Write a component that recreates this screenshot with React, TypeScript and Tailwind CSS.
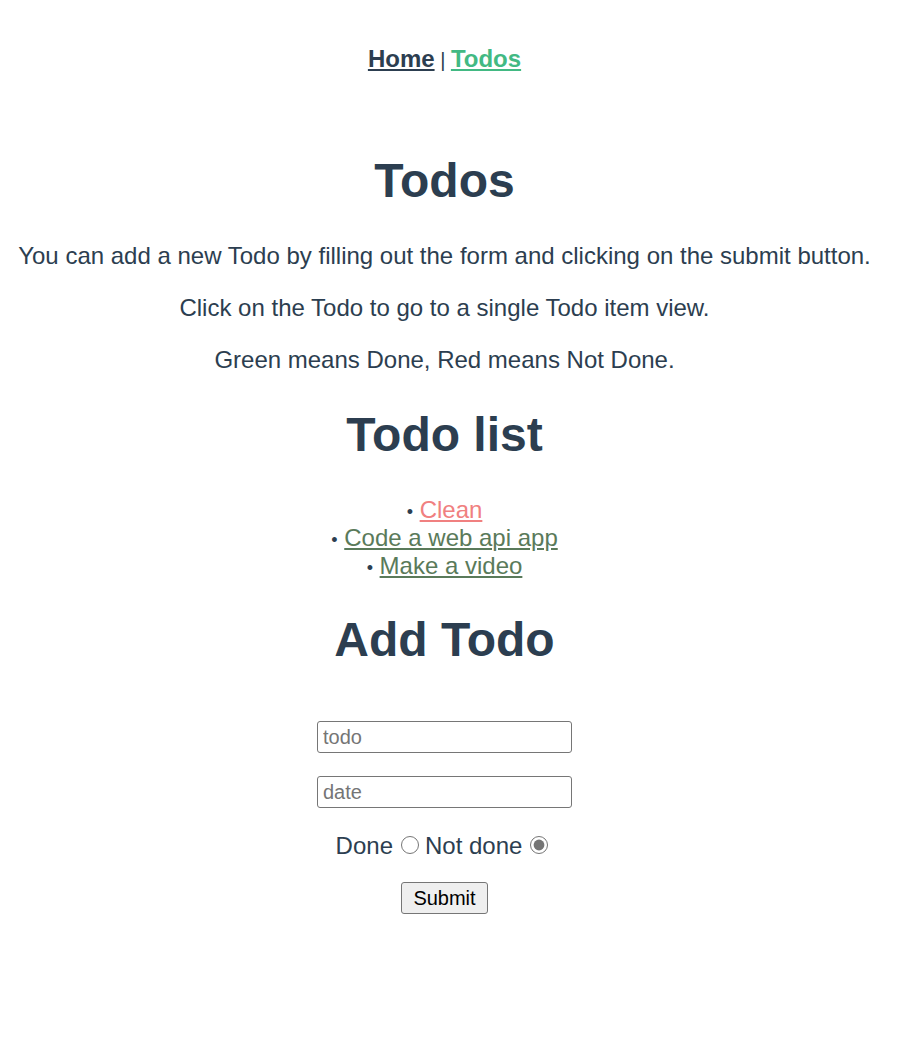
export default function App() {
  const todos = [
    { name: "Clean", done: false },
    { name: "Code a web api app", done: true },
    { name: "Make a video", done: true },
  ];
  return (
    <div className="w-[889px] text-center text-[#2c3e50] text-[24px] leading-[normal] font-['Liberation_Sans',Arial,sans-serif]">
      <nav className="p-[45px] font-bold">
        <a href="#" className="underline text-[#2c3e50]">Home</a>
        <span className="font-normal text-[20px]"> | </span>
        <a href="#" className="underline text-[#42b983]">Todos</a>
      </nav>
      <h1 className="text-[48px] font-bold mt-[35px] mb-[34px]">Todos</h1>
      <p className="my-[24px]">You can add a new Todo by filling out the form and clicking on the submit button.</p>
      <p className="my-[24px]">Click on the Todo to go to a single Todo item view.</p>
      <p className="my-[24px]">Green means Done, Red means Not Done.</p>
      <h2 className="text-[48px] font-bold mt-[33px] mb-[34px]">Todo list</h2>
      <ul className="my-[24px]">
        {todos.map((t) => (
          <li key={t.name}>
            <span className="text-[18px]">•</span>{" "}
            <a href="#" className={t.done ? "underline text-[#5a7a5a]" : "underline text-[#f08080]"}>{t.name}</a>
          </li>
        ))}
      </ul>
      <h2 className="text-[48px] font-bold mt-[32px]">Add Todo</h2>
      <form className="flex flex-col items-center mt-[54px]">
        <input placeholder="todo" className="w-[255px] h-[32px] border border-[#767676] rounded-[3px] px-[5px] text-[20px] placeholder:text-[#757575]" />
        <input placeholder="date" className="w-[255px] h-[32px] border border-[#767676] rounded-[3px] px-[5px] text-[20px] mt-[23px] placeholder:text-[#757575]" />
        <div className="mt-[24px] flex items-center">
          <span>Done</span>
          <input type="radio" name="done" className="w-[18px] h-[18px] ml-[8px] mr-[6px] mb-[3px]" />
          <span>Not done</span>
          <input type="radio" name="done" defaultChecked className="w-[18px] h-[18px] ml-[8px] mr-[5px] mb-[3px] accent-[#757575]" />
        </div>
        <button type="button" className="mt-[22px] w-[87px] h-[32px] border border-[#767676] rounded-[3px] bg-[#efefef] text-[20px] text-black">Submit</button>
      </form>
    </div>
  );
}
